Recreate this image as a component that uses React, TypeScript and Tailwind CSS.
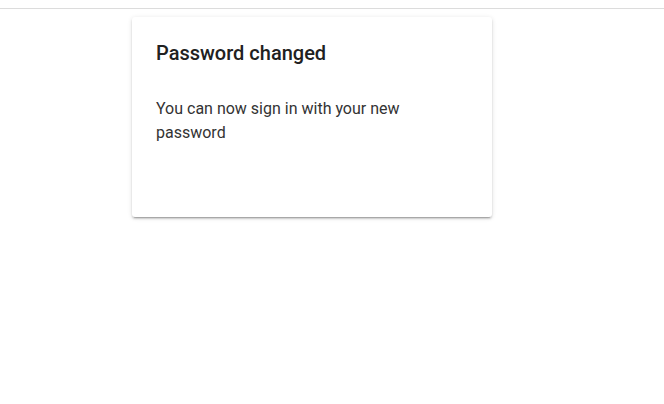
import React from 'react';

export default function App() {
  return (
    <div className="min-h-screen bg-white" style={{ fontFamily: 'Roboto, "Noto Sans", sans-serif' }}>
      <div className="h-[9px] border-b border-[#dcdcdc]" />
      <div className="pt-2 pl-[132px]">
        <div className="w-[360px] h-[200px] rounded-[3px] bg-white px-6 pt-[20px] shadow-[0_3px_1px_-2px_rgba(0,0,0,0.2),0_2px_2px_0_rgba(0,0,0,0.14),0_1px_5px_0_rgba(0,0,0,0.12)]">
          <h2 className="text-[20px] leading-[32px] font-medium text-[#212121]">Password changed</h2>
          <p className="mt-[28px] text-[16px] leading-6 text-[#333333]">
            You can now sign in with your new password
          </p>
        </div>
      </div>
    </div>
  );
}
